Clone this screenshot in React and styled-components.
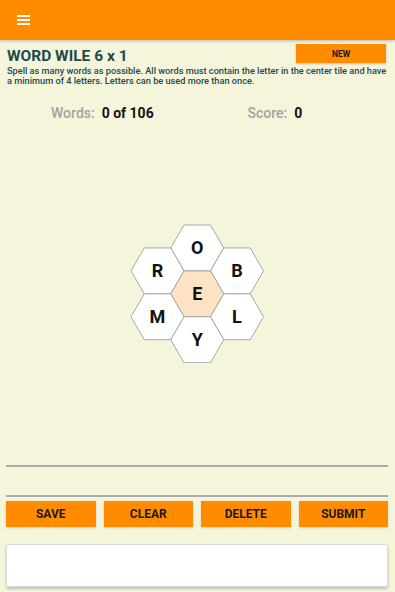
import React from 'react';
import styled, { createGlobalStyle } from 'styled-components';

const GlobalStyle = createGlobalStyle`
    body {
        margin: 0;
        background: #f5f5dc;
        font-family: Roboto, "Noto Sans", Arial, sans-serif;
    }
`;

const Page = styled.div`
    height: 100vh;
    display: flex;
    flex-direction: column;
    background: #f5f5dc;
`;

const AppBar = styled.header`
    height: 40px;
    flex-shrink: 0;
    background: #ff8c00;
    display: flex;
    align-items: center;
    padding-left: 17px;
    box-shadow: 0 1px 3px rgba(0, 0, 0, 0.25);
`;

const MenuButton = styled.button`
    width: 13px;
    height: 10px;
    padding: 0;
    border: none;
    background: none;
    display: flex;
    flex-direction: column;
    justify-content: space-between;
    cursor: pointer;

    span {
        display: block;
        height: 2px;
        background: #ffffff;
    }
`;

const TitleRow = styled.div`
    display: flex;
    justify-content: space-between;
    align-items: flex-start;
    padding: 4px 9px 0 7px;
`;

const Title = styled.h1`
    margin: 4px 0 0;
    font-size: 15.5px;
    line-height: 17px;
    font-weight: 700;
    color: #1e4a4c;
`;

const NewButton = styled.button`
    width: 90px;
    height: 19px;
    border: none;
    background: #ff8c00;
    color: #1a1a1a;
    font-family: Roboto, Arial, sans-serif;
    font-size: 8.5px;
    font-weight: 700;
    box-shadow: 0 1px 2px rgba(0, 0, 0, 0.2);
`;

const Intro = styled.p`
    margin: 1px 0 0;
    padding: 0 4px 0 7px;
    font-size: 9.2px;
    line-height: 10px;
    font-weight: 500;
    color: #1e4a4c;
`;

const Stats = styled.div`
    display: grid;
    grid-template-columns: 1fr 1fr;
    margin-top: 18px;
`;

const Stat = styled.div`
    display: flex;
    gap: 7px;
    padding-left: ${p => p.$indent}px;
    font-size: 14px;
    line-height: 18px;
`;

const StatLabel = styled.span`
    color: #a3a3a3;
    font-weight: 500;
`;

const StatValue = styled.span`
    color: #121212;
    font-weight: 700;
`;

const Board = styled.div`
    flex: 1;
    display: flex;
    align-items: center;
    justify-content: center;
`;

const WordBar = styled.div`
    height: 28px;
    margin: 0 7px 0 6px;
    border-top: 2px solid #ababab;
    border-bottom: 2px solid #ababab;
    display: flex;
    align-items: center;
    justify-content: center;
    font-size: 18px;
    font-weight: 700;
    color: #121212;
`;

const Actions = styled.div`
    display: grid;
    grid-template-columns: repeat(4, 1fr);
    gap: 8px;
    margin: 4px 7px 0 6px;
`;

const ActionButton = styled.button`
    height: 26px;
    border: none;
    background: #ff8c00;
    color: #1a1a1a;
    font-family: Roboto, Arial, sans-serif;
    font-size: 12px;
    font-weight: 700;
    box-shadow: 0 1px 2px rgba(0, 0, 0, 0.15);
`;

const Found = styled.div`
    height: 41px;
    margin: 17px 7px 5px 6px;
    background: #ffffff;
    border: 1px solid #dcdcdc;
    border-radius: 2px;
    box-shadow: 0 2px 3px rgba(0, 0, 0, 0.2);
`;

const SIDE = 26.5;
const H = SIDE * Math.sqrt(3);

// column, row offsets (in half-heights) from the centre tile
const tiles = [
    { letter: 'O', col: 0, row: -2 },
    { letter: 'R', col: -1, row: -1 },
    { letter: 'B', col: 1, row: -1 },
    { letter: 'E', col: 0, row: 0, center: true },
    { letter: 'M', col: -1, row: 1 },
    { letter: 'L', col: 1, row: 1 },
    { letter: 'Y', col: 0, row: 2 },
];

const hexPoints = (cx, cy) => [
    [cx - SIDE, cy],
    [cx - SIDE / 2, cy - H / 2],
    [cx + SIDE / 2, cy - H / 2],
    [cx + SIDE, cy],
    [cx + SIDE / 2, cy + H / 2],
    [cx - SIDE / 2, cy + H / 2],
].map(p => p.join(',')).join(' ');

const HexBoard = () => {
    const w = SIDE * 5 + 2;
    const h = H * 3 + 2;
    const ox = w / 2;
    const oy = h / 2;
    return (
        <svg width={w} height={h} viewBox={`0 0 ${w} ${h}`}>
            {tiles.map(t => {
                const cx = ox + t.col * SIDE * 1.5;
                const cy = oy + t.row * H / 2;
                return (
                    <g key={t.letter}>
                        <polygon
                            points={hexPoints(cx, cy)}
                            fill={t.center ? '#fde2c4' : '#ffffff'}
                            stroke="#a6a6a6"
                            strokeWidth="1"
                        />
                        <text
                            x={cx}
                            y={cy + 6.5}
                            textAnchor="middle"
                            fontFamily="Roboto, Arial, sans-serif"
                            fontWeight="700"
                            fontSize="18"
                            fill="#111111"
                        >
                            {t.letter}
                        </text>
                    </g>
                );
            })}
        </svg>
    );
};

const App = () => {
    return (
        <Page>
            <GlobalStyle />
            <AppBar>
                <MenuButton aria-label="menu">
                    <span />
                    <span />
                    <span />
                </MenuButton>
            </AppBar>
            <TitleRow>
                <Title>WORD WILE 6 x 1</Title>
                <NewButton>NEW</NewButton>
            </TitleRow>
            <Intro>
                Spell as many words as possible. All words must contain the letter in the center tile and have a minimum of 4 letters. Letters can be used more than once.
            </Intro>
            <Stats>
                <Stat $indent={51}>
                    <StatLabel>Words:</StatLabel>
                    <StatValue>0 of 106</StatValue>
                </Stat>
                <Stat $indent={50}>
                    <StatLabel>Score:</StatLabel>
                    <StatValue>0</StatValue>
                </Stat>
            </Stats>
            <Board>
                <HexBoard />
            </Board>
            <WordBar />
            <Actions>
                <ActionButton>SAVE</ActionButton>
                <ActionButton>CLEAR</ActionButton>
                <ActionButton>DELETE</ActionButton>
                <ActionButton>SUBMIT</ActionButton>
            </Actions>
            <Found />
        </Page>
    );
};

export default App;
